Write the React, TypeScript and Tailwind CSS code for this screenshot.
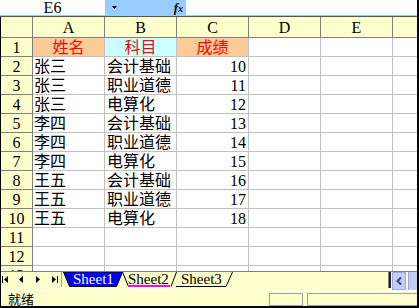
import React from 'react';

const rows: [string, string, string][] = [
    ['张三', '会计基础', '10'],
    ['张三', '职业道德', '11'],
    ['张三', '电算化', '12'],
    ['李四', '会计基础', '13'],
    ['李四', '职业道德', '14'],
    ['李四', '电算化', '15'],
    ['王五', '会计基础', '16'],
    ['王五', '职业道德', '17'],
    ['王五', '电算化', '18'],
    ['', '', ''],
    ['', '', ''],
    ['', '', ''],
];

const columns = ['A', 'B', 'C', 'D', 'E'];

const RowHead = ({ children }: { children?: React.ReactNode }) => (
    <div className="w-[32px] shrink-0 h-full box-border bg-[#ffffcc] border-r border-b border-[#808080] flex items-end justify-center leading-[17px]">
        {children}
    </div>
);

const Cell = ({ children, className = '' }: { children?: React.ReactNode; className?: string }) => (
    <div className={`w-[72px] shrink-0 h-full box-border border-r border-b border-[#c0c0c0] flex items-end leading-[17px] overflow-hidden whitespace-nowrap ${className}`}>
        {children}
    </div>
);

const NavButtons = () => (
    <svg width="60" height="18" viewBox="0 0 60 18" className="shrink-0">
        {/* first */}
        <rect x="1" y="4" width="1" height="7" fill="#000" />
        <polygon points="3,7.5 7,4 7,11" fill="#000" />
        {/* prev */}
        <polygon points="18,7.5 22,4 22,11" fill="#000" />
        {/* next */}
        <polygon points="39,7.5 35,4 35,11" fill="#000" />
        {/* last */}
        <polygon points="55,7.5 51,4 51,11" fill="#000" />
        <rect x="56" y="4" width="1" height="7" fill="#000" />
    </svg>
);

export default function App() {
    return (
        <div
            className="w-[419px] h-[308px] bg-white flex flex-col overflow-hidden border-r-2 border-b-2 border-black text-black"
            style={{ fontFamily: "'Liberation Serif', 'Noto Sans CJK SC', serif" }}
        >
            {/* Formula bar */}
            <div className="h-[15px] shrink-0 flex">
                <div className="w-[105px] flex items-center justify-center text-[16px] leading-[15px]">E6</div>
                <div className="w-[81px] bg-[#99ccff] flex items-center justify-between pl-[7px] pr-[3px]">
                    <svg width="5" height="3" viewBox="0 0 5 3">
                        <polygon points="0,0 5,0 2.5,3" fill="#000" />
                    </svg>
                    <span className="italic font-bold text-[13px] leading-[13px]">
                        f<span className="text-[10px]">x</span>
                    </span>
                </div>
                <div className="flex-1" />
            </div>
            <div className="h-px shrink-0 bg-[#99ccff]" />
            <div className="h-px shrink-0 bg-[#555555]" />

            <div className="flex-1 flex flex-col border-l border-black min-h-0">
                {/* Grid */}
                <div className="h-[254px] shrink-0 overflow-hidden text-[16px]">
                    <div className="h-[21px] flex">
                        <RowHead />
                        {columns.map((c) => (
                            <div
                                key={c}
                                className="w-[72px] shrink-0 h-full box-border bg-[#ffffcc] border-r border-b border-[#808080] flex items-end justify-center leading-[18px]"
                            >
                                {c}
                            </div>
                        ))}
                        <div className="flex-1 h-full box-border bg-[#ffffcc] border-b border-[#808080]" />
                    </div>

                    <div className="h-[19px] flex">
                        <RowHead>1</RowHead>
                        <Cell className="bg-[#ffcc99] justify-center text-[#ff0000]">姓名</Cell>
                        <Cell className="bg-[#ccffff] justify-center text-[#ff0000]">科目</Cell>
                        <Cell className="bg-[#ffcc99] justify-center text-[#ff0000]">成绩</Cell>
                        <Cell />
                        <Cell />
                        <div className="flex-1 h-full box-border border-b border-[#c0c0c0]" />
                    </div>

                    {rows.map((r, i) => (
                        <div key={i} className="h-[19px] flex">
                            <RowHead>{i + 2}</RowHead>
                            <Cell className="pl-[1px]">{r[0]}</Cell>
                            <Cell className="pl-[2px]">{r[1]}</Cell>
                            <Cell className="justify-end pr-[2px]">{r[2]}</Cell>
                            <Cell />
                            <Cell />
                            <div className="flex-1 h-full box-border border-b border-[#c0c0c0]" />
                        </div>
                    ))}
                </div>

                {/* Sheet tabs */}
                <div className="h-[19px] shrink-0 border-t border-[#808080] bg-[#ffffcc] flex">
                    <NavButtons />
                    <div className="w-px h-[15px] bg-[#a0a0a0] mr-px" />
                    <div className="relative w-[60px] h-[15px] shrink-0 flex items-center pl-[10px] text-[15px] leading-[15px] text-white">
                        <svg className="absolute inset-0" width="60" height="15" viewBox="0 0 60 15">
                            <polygon points="0.5,0 59.5,0 53.5,14.5 6.5,14.5" fill="#0000ff" stroke="#000" />
                        </svg>
                        <span className="relative">Sheet1</span>
                    </div>
                    <div className="relative w-[55px] h-[15px] shrink-0 -ml-px flex items-center pl-[6px] text-[15px] leading-[15px]">
                        <svg className="absolute inset-0" width="55" height="15" viewBox="0 0 55 15">
                            <path d="M0.5 0 L6.5 14.5 M49 14.5 L54.5 0" stroke="#000" fill="none" />
                            <rect x="6" y="13" width="42" height="2" fill="#ff00ff" />
                        </svg>
                        <span className="relative">Sheet2</span>
                    </div>
                    <div className="relative w-[57px] h-[15px] shrink-0 -ml-px flex items-center pl-[5px] text-[15px] leading-[15px]">
                        <svg className="absolute inset-0" width="57" height="15" viewBox="0 0 57 15">
                            <path d="M0 14.5 L50 14.5 L56.5 0" stroke="#000" fill="none" />
                        </svg>
                        <span className="relative">Sheet3</span>
                    </div>
                    <div className="flex-1" />
                    <div className="w-[3px] h-[16px] border-l border-[#808080] bg-[#202020] mr-px" />
                    <div className="w-[14px] h-full bg-[#c3cdf7] border border-[#9aa8e8] flex items-center justify-center">
                        <svg width="6" height="8" viewBox="0 0 6 8">
                            <path d="M5 0.5 L1.5 4 L5 7.5" stroke="#3c3c8c" strokeWidth="2" fill="none" />
                        </svg>
                    </div>
                    <div className="w-[2px]" />
                    <div className="w-[9px] h-full bg-[#c3cdf7] border-l border-[#9aa8e8]" />
                </div>

                {/* Status bar */}
                <div className="h-[16px] shrink-0 border-t border-white bg-[#ffffcc] flex items-start">
                    <span
                        className="pl-[7px] text-[13px] leading-[15px]"
                        style={{ fontFamily: "'Noto Sans CJK SC', sans-serif" }}
                    >
                        就绪
                    </span>
                    <div className="flex-1" />
                    <div className="w-[34px] h-[13px] mt-[2px] border border-[#a0a0a0]" />
                    <div className="w-[110px] h-[13px] mt-[2px] ml-[4px] border border-[#a0a0a0] border-r-0" />
                </div>
            </div>
        </div>
    );
}
